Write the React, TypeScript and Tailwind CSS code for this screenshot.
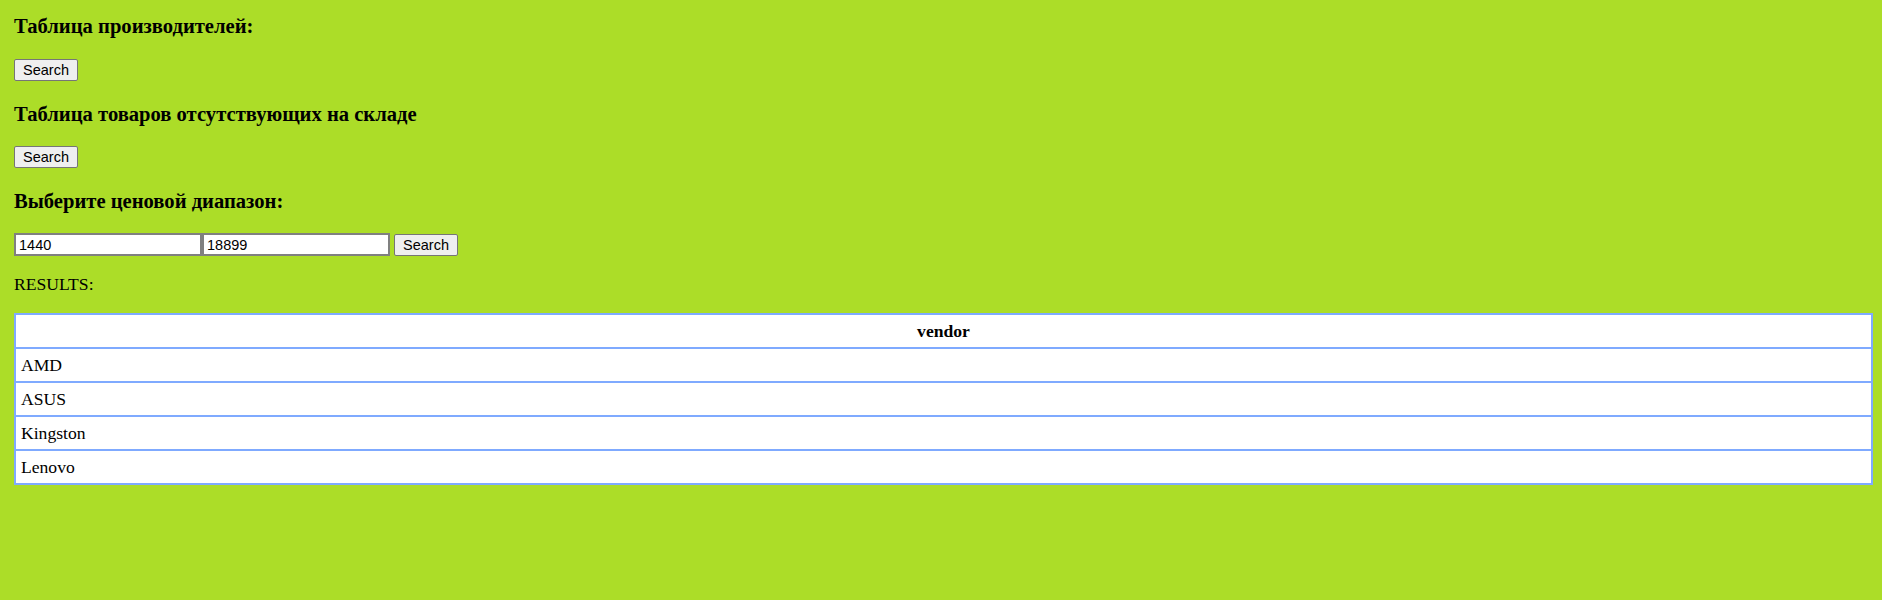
const vendors = ['AMD', 'ASUS', 'Kingston', 'Lenovo'];

function SearchButton() {
  return (
    <button
      type="button"
      className="h-[22px] w-[64px] rounded-[2px] border border-[#767676] bg-[#efefef] text-[14.5px] leading-none text-black font-['Liberation_Sans',Arial,sans-serif]"
    >
      Search
    </button>
  );
}

export default function App() {
  return (
    <div className="min-h-screen bg-[#acdd28] pl-[14px] pr-[9px] pt-[14px] pb-10 text-black font-['Liberation_Serif','Times_New_Roman',serif]">
      <h3 className="text-[20.6px] font-bold leading-[24px]">Таблица производителей:</h3>
      <div className="mt-[21px] flex">
        <SearchButton />
      </div>

      <h3 className="mt-[21px] text-[20.6px] font-bold leading-[24px]">Таблица товаров отсутствующих на складе</h3>
      <div className="mt-[20px] flex">
        <SearchButton />
      </div>

      <h3 className="mt-[21px] text-[20.6px] font-bold leading-[24px]">Выберите ценовой диапазон:</h3>
      <div className="mt-[20px] flex items-start">
        <input
          defaultValue="1440"
          className="h-[23px] w-[188px] border-2 border-[#808080] bg-white pl-[3px] text-[14.5px] text-black outline-none font-['Liberation_Sans',Arial,sans-serif]"
        />
        <input
          defaultValue="18899"
          className="h-[23px] w-[188px] border-2 border-[#808080] bg-white pl-[3px] text-[14.5px] text-black outline-none font-['Liberation_Sans',Arial,sans-serif]"
        />
        <div className="ml-[4px]">
          <SearchButton />
        </div>
      </div>

      <p className="mt-[17px] text-[17.6px] leading-[20px]">RESULTS:</p>

      <table className="mt-[19px] w-full border-collapse border-2 border-[#7faaff] bg-white text-[17.6px] leading-[20px]">
        <thead>
          <tr>
            <th className="border-2 border-[#7faaff] px-[5px] py-[6px] text-center font-bold">vendor</th>
          </tr>
        </thead>
        <tbody>
          {vendors.map((v) => (
            <tr key={v}>
              <td className="border-2 border-[#7faaff] px-[5px] py-[6px] text-left">{v}</td>
            </tr>
          ))}
        </tbody>
      </table>
    </div>
  );
}
